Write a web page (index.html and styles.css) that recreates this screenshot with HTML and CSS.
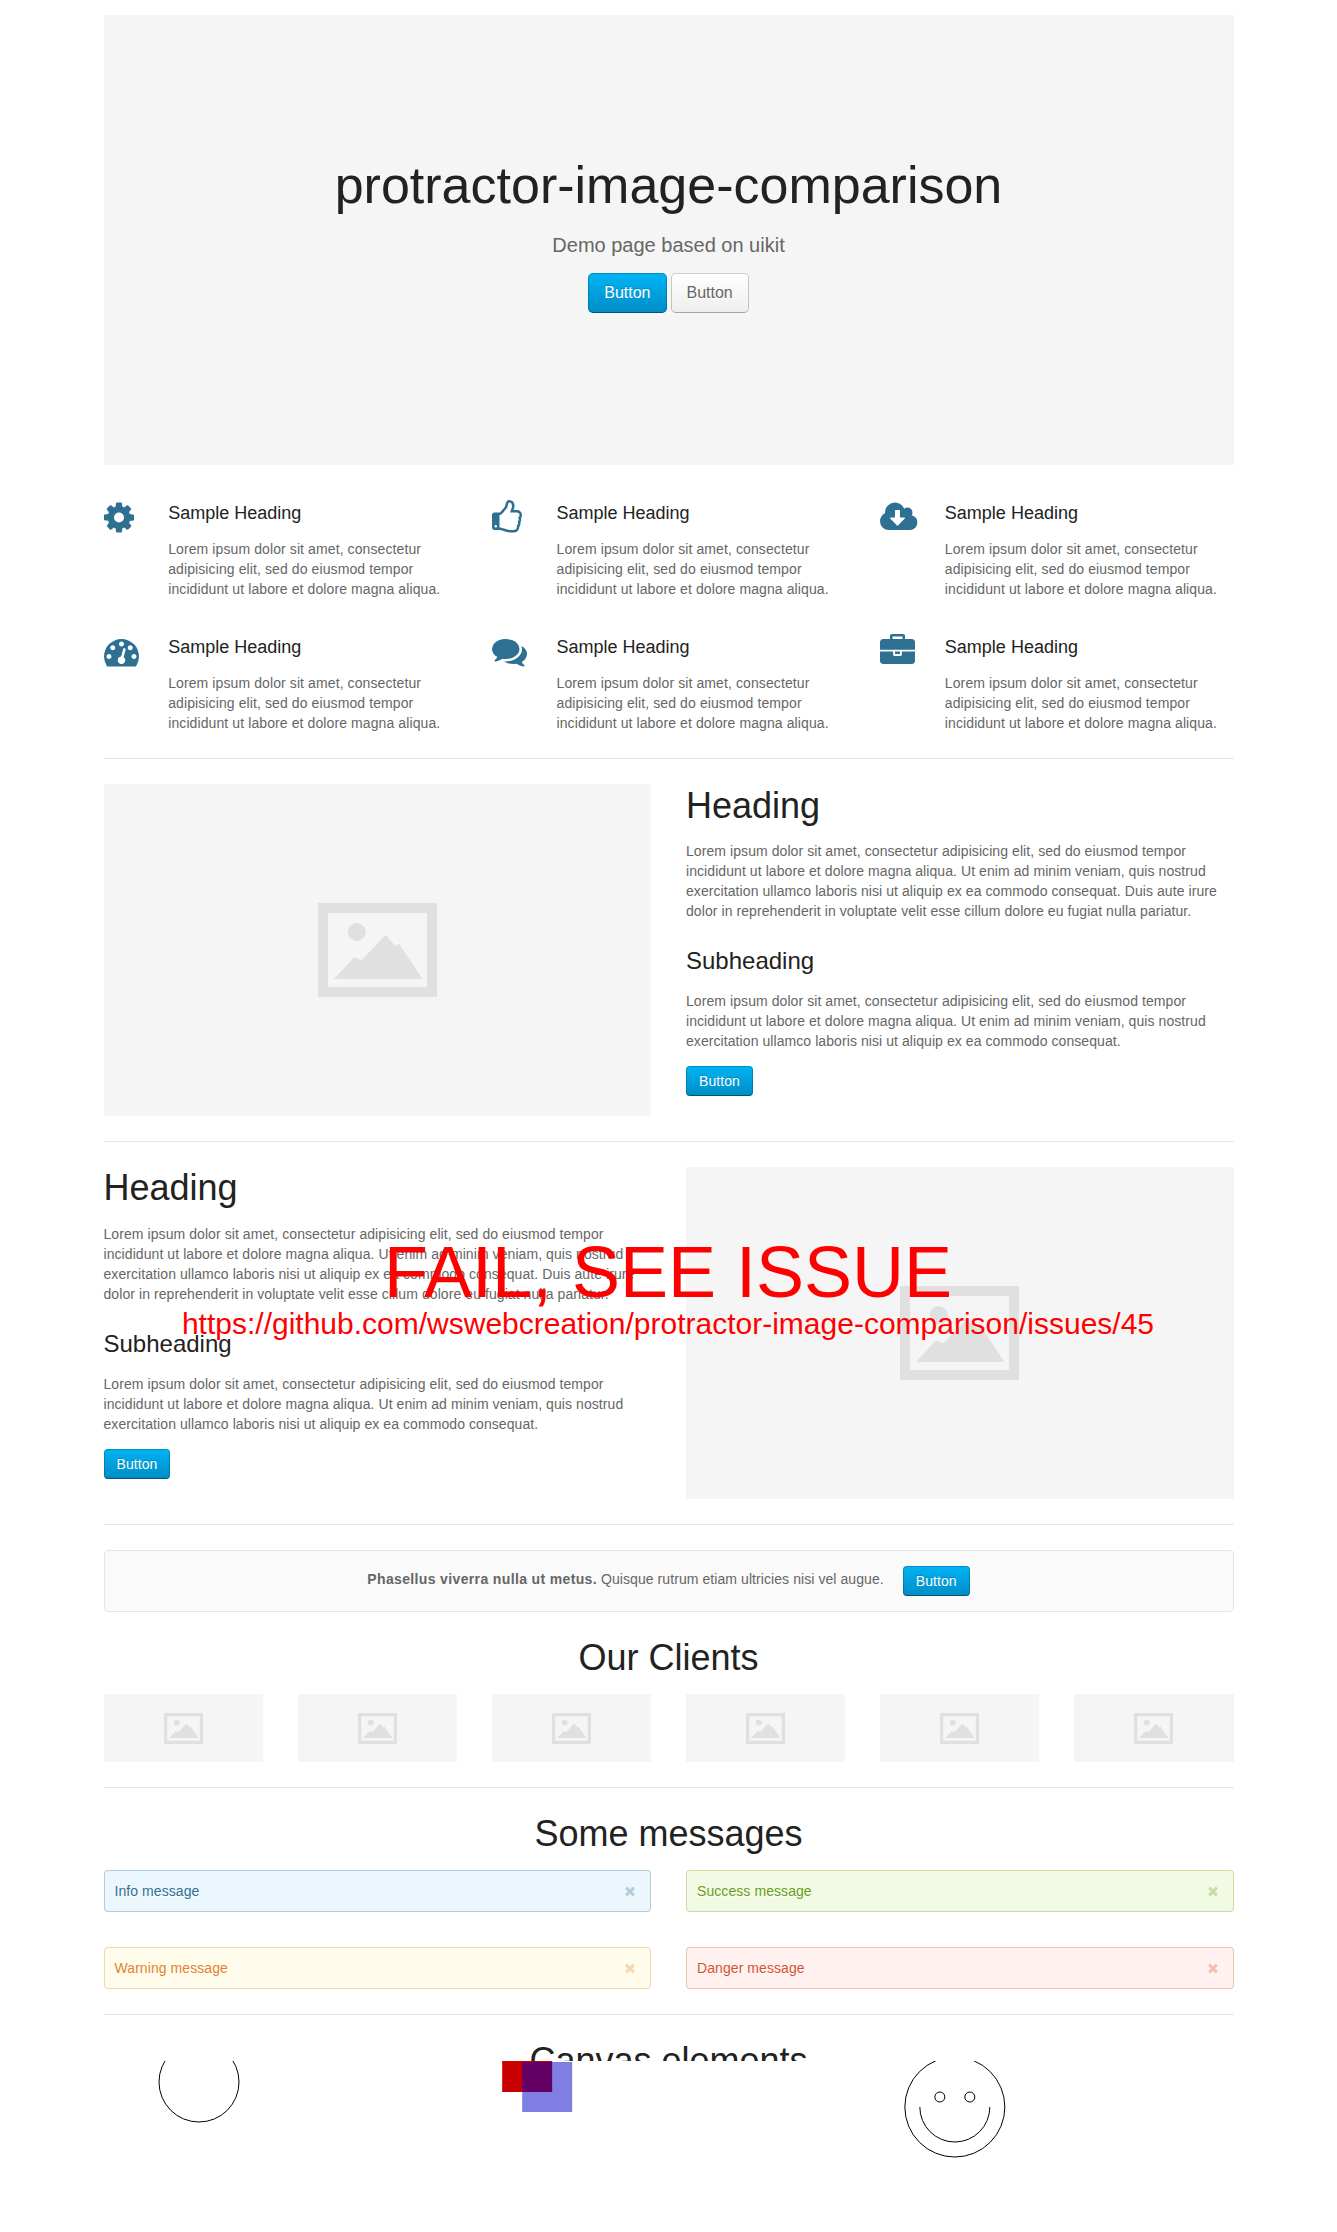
FILE: index.html
```html
<!DOCTYPE html>
<html lang="en">
<head>
<meta charset="utf-8">
<title>protractor-image-comparison</title>
<link rel="stylesheet" href="styles.css">
</head>
<body>
<svg class="sprite" aria-hidden="true">
  <symbol id="cog" viewBox="128 0 1536 1792"><path d="M1152 896q0-106-75-181t-181-75-181 75-75 181 75 181 181 75 181-75 75-181zm512-109v222q0 12-8 23t-20 13l-185 28q-19 54-39 91 35 50 107 138 10 12 10 25t-9 23q-27 37-99 108t-94 71q-12 0-26-9l-138-108q-44 23-91 38-16 136-29 186-7 28-36 28h-222q-14 0-24.5-8.5t-11.5-21.5l-28-184q-49-16-90-37l-141 107q-10 9-25 9-14 0-25-11-126-114-165-168-7-10-7-23 0-12 8-23 15-21 51-66.5t54-70.5q-27-50-41-99l-183-27q-13-2-21-12.5t-8-23.5v-222q0-12 8-23t19-13l186-28q14-46 39-92-40-57-107-138-10-12-10-24 0-10 9-23 26-36 98.5-107.5t94.5-71.5q13 0 26 10l138 107q44-23 91-38 16-136 29-186 7-28 36-28h222q14 0 24.5 8.5t11.5 21.5l28 184q49 16 90 37l142-107q9-9 24-9 13 0 25 10 129 119 165 170 7 8 7 22 0 12-8 23-15 21-51 66.5t-54 70.5q26 50 41 98l183 28q13 2 21 12.5t8 23.5z"/></symbol>
  <symbol id="thumb" viewBox="128 0 1536 1792"><path d="M384 1344q0-26-19-45t-45-19-45 19-19 45 19 45 45 19 45-19 19-45zm1152-576q0-51-39-89.5t-89-38.5h-352q0-58 48-159.5t48-160.5q0-98-32-145t-128-47q-26 26-38 85t-30.5 125.5-59.5 109.5q-22 23-77 91-4 5-23 30t-31.5 41-34.5 42.5-40 44-38.5 35.5-40 27-35.5 9h-32v640h32q13 0 31.5 3t33 6.5 38 11 35 11.5 35.5 12.5 29 10.5q211 73 342 73h121q192 0 192-167 0-26-5-56 30-16 47.5-52.5t17.5-73.5-18-69q53-50 53-119 0-25-10-55.5t-25-47.5q32-1 53.5-47t21.5-81zm128-1q0 89-49 163 9 33 9 69 0 77-38 144 3 21 3 43 0 101-60 178 1 139-85 219.5t-227 80.5h-129q-96 0-189.5-22.5t-216.5-65.5q-116-40-138-40h-288q-53 0-90.5-37.5t-37.5-90.5v-640q0-53 37.5-90.5t90.5-37.5h274q36-24 137-155 58-75 107-128 24-25 35.5-85.5t30.5-126.5 62-108q39-37 90-37 84 0 151 32.5t102 101.5 35 186q0 93-48 192h176q104 0 180 76t76 179z"/></symbol>
  <symbol id="cloud" viewBox="0 0 1920 1792"><path d="M1280 928q0-14-9-23t-23-9h-224v-352q0-13-9.500-22.500t-22.500-9.500h-192q-13 0-22.500 9.500t-9.500 22.500v352h-224q-13 0-22.500 9.500t-9.500 22.500q0 14 9 23l352 352q9 9 23 9t23-9l351-351q10-12 10-24zm640 224q0 159-112.500 271.500t-271.500 112.500h-1088q-185 0-316.500-131.500t-131.500-316.500q0-130 70-240t188-165q-2-30-2-43 0-212 150-362t362-150q156 0 285.500 87t188.500 231q71-62 166-62 106 0 181 75t75 181q0 76-41 138 130 31 213.500 135.500t83.500 238.500z"/></symbol>
  <symbol id="gauge" viewBox="0 0 1792 1792"><path d="M384 1152q0-53-37.5-90.5t-90.5-37.5-90.5 37.5-37.5 90.5 37.5 90.5 90.5 37.5 90.5-37.5 37.5-90.5zm192-448q0-53-37.5-90.5t-90.5-37.5-90.5 37.5-37.5 90.5 37.5 90.5 90.5 37.5 90.5-37.5 37.5-90.5zm428 481l101-382q6-26-7.5-48.5t-38.5-29.5-48 6.5-30 39.5l-101 382q-60 5-107 43.5t-63 98.5q-20 77 20 146t117 89 146-20 89-117q16-60-6-117t-72-91zm660-33q0-53-37.5-90.5t-90.5-37.5-90.5 37.5-37.5 90.5 37.5 90.5 90.5 37.5 90.5-37.5 37.5-90.5zm-640-640q0-53-37.5-90.5t-90.5-37.5-90.5 37.5-37.5 90.5 37.5 90.5 90.5 37.5 90.5-37.5 37.5-90.5zm448 192q0-53-37.5-90.5t-90.5-37.5-90.5 37.5-37.5 90.5 37.5 90.5 90.5 37.5 90.5-37.5 37.5-90.5zm320 448q0 261-141 483-19 29-54 29h-1402q-35 0-54-29-141-221-141-483 0-182 71-348t191-286 286-191 348-71 348 71 286 191 191 286 71 348z"/></symbol>
  <symbol id="comments" viewBox="0 0 1792 1792"><path d="M1408 768q0 139-94 257t-256.5 186.5-353.5 68.5q-86 0-176-16-124 88-278 128-36 9-86 16h-3q-11 0-20.5-8t-11.5-21q-1-3-1-6.5t.5-6.5 2-6l2.500-5 3.500-5.500 4-5 4.500-5 4-4.500q5-6 23-25t26-29.500 22.500-29 25-38.500 20.500-44q-124-72-195-177t-71-224q0-139 94-257t256.500-186.500 353.500-68.500 353.500 68.500 256.500 186.500 94 257zm384 256q0 120-71 224.500t-195 176.500q10 24 20.500 44t25 38.500 22.500 29 26 29.500 23 25q1 1 4 4.500t4.500 5 4 5 3.500 5.500l2.500 5 2 6 .5 6.500-1 6.500q-3 14-13 22t-22 7q-50-7-86-16-154-40-278-128-90 16-176 16-271 0-472-132 58 4 88 4 161 0 309-45t264-129q125-92 192-212t67-254q0-77-23-152 129 71 204 178t75 230z"/></symbol>
  <symbol id="briefcase" viewBox="0 0 1792 1792"><path d="M640 256h512v-128h-512v128zm1152 640v480q0 66-47 113t-113 47h-1472q-66 0-113-47t-47-113v-480h672v160q0 26 19 45t45 19h320q26 0 45-19t19-45v-160h672zm-768 0v128h-256v-128h256zm768-480v384h-1792v-384q0-66 47-113t113-47h352v-160q0-40 28-68t68-28h576q40 0 68 28t28 68v160h352q66 0 113 47t47 113z"/></symbol>
  <symbol id="times" viewBox="0 0 1792 1792"><path d="M1490 1322q0 40-28 68l-136 136q-28 28-68 28t-68-28l-294-294-294 294q-28 28-68 28t-68-28l-136-136q-28-28-28-68t28-68l294-294-294-294q-28-28-28-68t28-68l136-136q28-28 68-28t68 28l294 294 294-294q28-28 68-28t68 28l136 136q28 28 28 68t-28 68l-294 294 294 294q28 28 28 68z"/></symbol>
  <symbol id="picture" viewBox="0 0 119 94"><path fill-rule="evenodd" d="M0 0h119v94H0zM10 10v74h99V10z"/><circle cx="38.800" cy="29" r="9"/><path d="M16 76 36 54.300l7.600 3L67.700 32l9.600 11 3.800-2.300L104.500 76z"/></symbol>
</svg>

<main class="container">
  <header class="hero">
    <h1 class="hero-title">protractor-image-comparison</h1>
    <p class="hero-lead">Demo page based on uikit</p>
    <div class="hero-actions">
      <a class="button button-primary button-large">Button</a>
      <a class="button button-large">Button</a>
    </div>
  </header>

  <section class="features">
    <article class="feature"><svg class="icon icon-narrow"><use href="#cog"/></svg><div><h3>Sample Heading</h3><p>Lorem ipsum dolor sit amet, consectetur adipisicing elit, sed do eiusmod tempor incididunt ut labore et dolore magna aliqua.</p></div></article>
    <article class="feature"><svg class="icon icon-narrow"><use href="#thumb"/></svg><div><h3>Sample Heading</h3><p>Lorem ipsum dolor sit amet, consectetur adipisicing elit, sed do eiusmod tempor incididunt ut labore et dolore magna aliqua.</p></div></article>
    <article class="feature"><svg class="icon icon-wide"><use href="#cloud"/></svg><div><h3>Sample Heading</h3><p>Lorem ipsum dolor sit amet, consectetur adipisicing elit, sed do eiusmod tempor incididunt ut labore et dolore magna aliqua.</p></div></article>
    <article class="feature"><svg class="icon"><use href="#gauge"/></svg><div><h3>Sample Heading</h3><p>Lorem ipsum dolor sit amet, consectetur adipisicing elit, sed do eiusmod tempor incididunt ut labore et dolore magna aliqua.</p></div></article>
    <article class="feature"><svg class="icon"><use href="#comments"/></svg><div><h3>Sample Heading</h3><p>Lorem ipsum dolor sit amet, consectetur adipisicing elit, sed do eiusmod tempor incididunt ut labore et dolore magna aliqua.</p></div></article>
    <article class="feature"><svg class="icon"><use href="#briefcase"/></svg><div><h3>Sample Heading</h3><p>Lorem ipsum dolor sit amet, consectetur adipisicing elit, sed do eiusmod tempor incididunt ut labore et dolore magna aliqua.</p></div></article>
  </section>

  <hr class="divider">

  <section class="split">
    <div class="placeholder"><svg class="picture"><use href="#picture"/></svg></div>
    <div>
      <h1>Heading</h1>
      <p>Lorem ipsum dolor sit amet, consectetur adipisicing elit, sed do eiusmod tempor incididunt ut labore et dolore magna aliqua. Ut enim ad minim veniam, quis nostrud exercitation ullamco laboris nisi ut aliquip ex ea commodo consequat. Duis aute irure dolor in reprehenderit in voluptate velit esse cillum dolore eu fugiat nulla pariatur.</p>
      <h2>Subheading</h2>
      <p>Lorem ipsum dolor sit amet, consectetur adipisicing elit, sed do eiusmod tempor incididunt ut labore et dolore magna aliqua. Ut enim ad minim veniam, quis nostrud exercitation ullamco laboris nisi ut aliquip ex ea commodo consequat.</p>
      <a class="button button-primary">Button</a>
    </div>
  </section>

  <hr class="divider">

  <section class="split">
    <div>
      <h1>Heading</h1>
      <p>Lorem ipsum dolor sit amet, consectetur adipisicing elit, sed do eiusmod tempor incididunt ut labore et dolore magna aliqua. Ut enim ad minim veniam, quis nostrud exercitation ullamco laboris nisi ut aliquip ex ea commodo consequat. Duis aute irure dolor in reprehenderit in voluptate velit esse cillum dolore eu fugiat nulla pariatur.</p>
      <h2>Subheading</h2>
      <p>Lorem ipsum dolor sit amet, consectetur adipisicing elit, sed do eiusmod tempor incididunt ut labore et dolore magna aliqua. Ut enim ad minim veniam, quis nostrud exercitation ullamco laboris nisi ut aliquip ex ea commodo consequat.</p>
      <a class="button button-primary">Button</a>
    </div>
    <div class="placeholder"><svg class="picture"><use href="#picture"/></svg></div>
    <div class="notice">
      <div class="notice-title">FAIL, SEE ISSUE</div>
      <div class="notice-link">https://github.com/wswebcreation/protractor-image-comparison/issues/45</div>
    </div>
  </section>

  <hr class="divider">

  <section class="callout">
    <p class="callout-text"><strong>Phasellus viverra nulla ut metus.</strong> Quisque rutrum etiam ultricies nisi vel augue.</p>
    <a class="button button-primary">Button</a>
  </section>

  <h1 class="section-title">Our Clients</h1>
  <section class="clients">
    <div class="placeholder"><svg class="picture"><use href="#picture"/></svg></div>
    <div class="placeholder"><svg class="picture"><use href="#picture"/></svg></div>
    <div class="placeholder"><svg class="picture"><use href="#picture"/></svg></div>
    <div class="placeholder"><svg class="picture"><use href="#picture"/></svg></div>
    <div class="placeholder"><svg class="picture"><use href="#picture"/></svg></div>
    <div class="placeholder"><svg class="picture"><use href="#picture"/></svg></div>
  </section>

  <hr class="divider">

  <h1 class="section-title">Some messages</h1>
  <section class="messages">
    <div class="alert alert-info">Info message<svg class="close"><use href="#times"/></svg></div>
    <div class="alert alert-success">Success message<svg class="close"><use href="#times"/></svg></div>
    <div class="alert alert-warning">Warning message<svg class="close"><use href="#times"/></svg></div>
    <div class="alert alert-danger">Danger message<svg class="close"><use href="#times"/></svg></div>
  </section>

  <hr class="divider">

  <h1 class="section-title section-title-cut">Canvas elements</h1>
  <section class="drawings">
    <svg class="drawing" viewBox="0 29 300 121"><circle cx="95" cy="50" r="40"/></svg>
    <svg class="drawing" viewBox="0 29 300 121"><rect class="red" x="10.170" y="10" width="50" height="50"/><rect class="blue" x="30.170" y="30" width="50" height="50"/></svg>
    <svg class="drawing" viewBox="0 29 300 121"><circle cx="74.830" cy="75" r="50"/><path d="M109.830 75a35 35 0 0 1-70 0"/><circle cx="59.830" cy="65" r="5"/><circle cx="89.830" cy="65" r="5"/></svg>
  </section>
</main>
</body>
</html>
```
FILE: styles.css
```css
body {
  margin: 0;
  background: #fff;
  color: #666;
  font: 14px/20px "Liberation Sans", Arial, sans-serif;
  letter-spacing: 0.075px;
}

.sprite {
  display: none;
}

.container {
  width: 1130px;
  margin: 0 auto;
  padding-top: 15px;
}

h1,
h2,
h3,
p {
  margin: 0 0 15px;
}

h1,
h2,
h3 {
  color: #222;
  font-weight: normal;
  letter-spacing: 0;
}

h1 {
  font-size: 36px;
  line-height: 42px;
}

h2 {
  margin-top: 25px;
  font-size: 24px;
  line-height: 30px;
}

h3 {
  margin-bottom: 14px;
  padding-top: 1px;
  font-size: 18px;
  line-height: 24px;
}

.hero {
  display: flex;
  flex-direction: column;
  justify-content: center;
  height: 450px;
  background: #f5f5f5;
  letter-spacing: 0;
  text-align: center;
}

.hero-title {
  margin-bottom: 16px;
  font-size: 52px;
  line-height: 64px;
}

.hero-lead {
  margin-bottom: 16px;
  font-size: 20px;
  line-height: 24px;
}

.hero-actions {
  display: flex;
  justify-content: center;
  gap: 4px;
  margin-bottom: 15px;
}

.button {
  display: inline-block;
  box-sizing: border-box;
  min-height: 30px;
  padding: 0 12px;
  border: 1px solid rgba(0, 0, 0, 0.2);
  border-bottom-color: rgba(0, 0, 0, 0.3);
  border-radius: 4px;
  background: #f5f5f5 linear-gradient(#fff, #eee) border-box;
  color: #666;
  font-size: 14px;
  line-height: 28px;
  text-align: center;
  text-shadow: 0 1px 0 #fff;
  vertical-align: middle;
}

.button-primary {
  border-bottom-color: rgba(0, 0, 0, 0.4);
  background: #009dd8 linear-gradient(#00b4f5, #008dc5) border-box;
  color: #fff;
  text-shadow: 0 -1px 0 rgba(0, 0, 0, 0.2);
}

.button-large {
  min-height: 40px;
  padding: 0 15px;
  border-radius: 5px;
  font-size: 16px;
  line-height: 38px;
}

.features {
  display: grid;
  grid-template-columns: repeat(3, 1fr);
  gap: 35px;
  margin-top: 35px;
}

.feature {
  display: grid;
  grid-template-columns: 64.7px 1fr;
}

.feature p {
  margin-bottom: 0;
  letter-spacing: 0.1px;
}

.icon {
  width: 35px;
  height: 35px;
  fill: #2d7091;
}

.icon-narrow {
  width: 30px;
}

.icon-wide {
  width: 37.5px;
}

.divider {
  height: 1px;
  margin: 25px 0;
  border: 0;
  background: #e5e5e5;
}

.split {
  position: relative;
  display: grid;
  grid-template-columns: 1fr 1fr;
  gap: 35px;
  height: 332px;
}

.placeholder + div h1 {
  margin-bottom: 14px;
  padding-top: 1px;
}

.placeholder {
  display: flex;
  align-items: center;
  justify-content: center;
  background: #f5f5f5;
}

.picture {
  width: 119px;
  height: 94px;
  fill: #e0e0e0;
}

.notice {
  position: absolute;
  top: 65px;
  left: -1px;
  right: 0;
  color: #f00;
  letter-spacing: 0;
  text-align: center;
}

.notice-title {
  font-size: 72px;
  line-height: 80px;
}

.notice-link {
  font-size: 30px;
  line-height: 24px;
}

.callout {
  display: flex;
  justify-content: center;
  gap: 19px;
  padding: 15px;
  border: 1px solid #e5e5e5;
  border-radius: 4px;
  background: #fafafa;
}

.callout-text {
  margin: 0;
  line-height: 27px;
}

.callout-text strong {
  letter-spacing: 0.36px;
}

.section-title {
  margin-top: 25px;
  text-align: center;
}

.section-title-cut {
  height: 21px;
  margin-bottom: 0;
  overflow: hidden;
}

.clients {
  display: grid;
  grid-template-columns: repeat(6, 1fr);
  gap: 35px;
  height: 68px;
}

.clients .picture {
  width: 39px;
  height: 31px;
}

.messages {
  display: grid;
  grid-template-columns: 1fr 1fr;
  gap: 35px;
}

.alert {
  display: flex;
  align-items: center;
  justify-content: space-between;
  padding: 10px 13px 10px 10px;
  border: 1px solid;
  border-radius: 4px;
  text-shadow: 0 1px 0 #fff;
}

.close {
  width: 14px;
  height: 14px;
  fill: currentColor;
  opacity: 0.3;
}

.alert-info {
  border-color: rgba(45, 112, 145, 0.3);
  background: #ebf7fd;
  color: #2d7091;
}

.alert-success {
  border-color: rgba(101, 159, 19, 0.3);
  background: #f2fae3;
  color: #659f13;
}

.alert-warning {
  border-color: rgba(226, 131, 39, 0.3);
  background: #fffceb;
  color: #e28327;
}

.alert-danger {
  border-color: rgba(216, 80, 48, 0.3);
  background: #fff1f0;
  color: #d85030;
}

.drawings {
  display: grid;
  grid-template-columns: repeat(3, 1fr);
  gap: 35px;
}

.drawing {
  width: 300px;
  height: 121px;
  fill: none;
  stroke: #000;
  stroke-width: 1;
}

.red {
  fill: #c80000;
  stroke: none;
}

.blue {
  fill: rgba(0, 0, 200, 0.5);
  stroke: none;
}
```
